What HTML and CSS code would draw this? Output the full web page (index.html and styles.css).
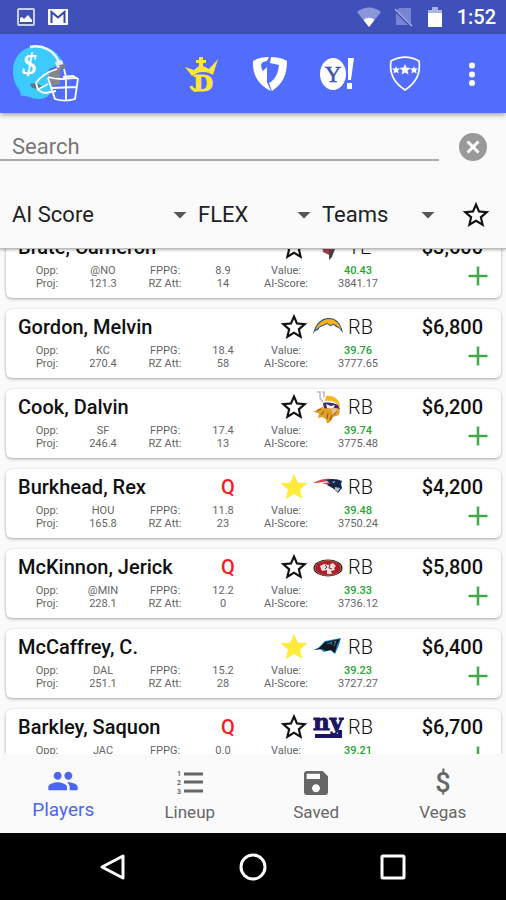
FILE: index.html
```html
<!DOCTYPE html>
<html lang="en">
<head>
    <meta charset="UTF-8">
    <meta name="viewport" content="width=device-width, initial-scale=1.0">
    <title>Players</title>
    <link rel="stylesheet" href="styles.css">
</head>
<body>
    <svg class="sprite" aria-hidden="true">
        <symbol id="star-outline" viewBox="0 0 24 24"><path d="M22 9.24l-7.19-.62L12 2 9.19 8.63 2 9.24l5.46 4.73L5.82 21 12 17.27 18.18 21l-1.63-7.03L22 9.24zM12 15.4l-3.76 2.27 1-4.28-3.32-2.88 4.38-.38L12 6.1l1.71 4.04 4.38.38-3.32 2.88 1 4.28L12 15.4z"/></symbol>
        <symbol id="star-full" viewBox="0 0 24 24"><path d="M12 17.27L18.18 21l-1.64-7.03L22 9.24l-7.19-.61L12 2 9.19 8.63 2 9.24l5.46 4.73L5.82 21z"/></symbol>
        <symbol id="arrow" viewBox="0 0 24 24"><path d="M5.500 9h13l-6.500 6.500z"/></symbol>
        <symbol id="plus" viewBox="0 0 24 24"><path d="M2.500 12h19M12 2.500v19" fill="none" stroke="currentColor" stroke-width="2.500"/></symbol>
        <symbol id="team-tb" viewBox="0 0 32 32">
            <path d="M9 8l15 1-2 10-5 5-6-3z" fill="#a8404c"/>
            <path d="M1 16h2v2H1zM17 20l6-2-3 8-3 3z" fill="#4a4242"/>
        </symbol>
        <symbol id="team-lac" viewBox="0 0 32 32">
            <path d="M1 23C3 13 9 7 17 7c7 0 12 5 14 15l-4-5-3-1-2-2-4 1-3-2-4 2-3 1-2 3-3 1z" fill="#1d4f86"/>
            <path d="M3 19C6 12 11 8 17 8c6 0 10 4 12 10l-4-3-3-2-4 1-3-2-4 2-3 1-2 2z" fill="#f5b01b"/>
        </symbol>
        <symbol id="team-min" viewBox="0 0 32 32">
            <path d="M5 1h3v6l3 4M10 1h2v5" fill="none" stroke="#bbb" stroke-width="1.500"/>
            <path d="M14 5c8-1 14 4 14 11l-3-3c-3-3-6-4-12-3z" fill="#f7b71c"/>
            <path d="M11 12c6-1 11 0 15 2l2 4-8-1-8 1z" fill="#3f2b6f"/>
            <path d="M14 13l5 2 4-1-2 4-6-1z" fill="#f4eee6"/>
            <path d="M1 21l9-5 5 2 6-1 7 1-1 6-6 2-2 4-4 3-1-5-4-2-4 1 1-5z" fill="#e0a021"/>
            <path d="M19 18l5-1 2 4-5 2z" fill="#e8bd96"/>
            <path d="M12 20l-3 4M16 22l-1 6M20 24l-2 5M9 18l-4 2M25 20l-3 4" stroke="#85521b" fill="none"/>
        </symbol>
        <symbol id="team-ne" viewBox="0 0 32 32">
            <path d="M1 12c7-4 14-5 18-4l-2 6-8-2z" fill="#d8404e"/>
            <path d="M4 12l13-2v1l-9 2z" fill="#fff"/>
            <path d="M14 9c6-2 12-1 16 1l-1 3 1 4-4 5-4-4-7-4 3-2z" fill="#14264b"/>
            <path d="M23 16l5 1-2 4-3-2z" fill="#b4bdc6"/>
            <path d="M19 10l2 1 2-1-1 2" fill="#fff"/>
        </symbol>
        <symbol id="team-sf" viewBox="0 0 32 32">
            <ellipse cx="16" cy="17" rx="14.500" ry="8.500" fill="#281c19"/>
            <ellipse cx="16" cy="17" rx="13" ry="7.500" fill="#b1192d" stroke="#a98458" stroke-width=".700"/>
            <path d="M8 15l4-2 4 1 5-2 3 3-2 2 1 2-4 1 1 3h-5v-4l-5 1-1-2z" fill="#eadfd9"/>
            <path d="M13 14l2 2-2 2M18 13l-1 4 3 1" fill="none" stroke="#7c3437"/>
        </symbol>
        <symbol id="team-car" viewBox="0 0 32 32">
            <path d="M1 19l5-2 7-7 16-3-2 7-4 9-5-4-6 2-4-3z" fill="#1389c1"/>
            <path d="M2 19l5-2 6-6 15-3-3 6-2 8-4-3-5 1-4-2z" fill="#101820"/>
            <path d="M15 13l5-2-1 3M22 11l2-1-2 5" fill="none" stroke="#507893"/>
        </symbol>
        <symbol id="team-nyg" viewBox="0 0 32 32">
            <text x="16" y="19" text-anchor="middle" font-family="DejaVu Serif, serif" font-weight="700" font-size="23" fill="#1b1464" stroke="#1b1464">ny</text>
            <path d="M3 25h25v-6" fill="none" stroke="#1b1464" stroke-width="4"/>
        </symbol>
    </svg>

    <div class="screen">
        <div class="status-bar">
            <svg class="status-icon" viewBox="0 0 20 20">
                <rect x="2" y="2" width="16" height="16" rx="1" fill="none" stroke="#c9cff0" stroke-width="2"/>
                <path d="M4 15v-4l2-1 2 2 4-4 4 5v2z" fill="#fff"/>
            </svg>
            <svg class="status-icon" viewBox="0 0 20 20">
                <rect x="0" y="2" width="20" height="16" rx="1" fill="#fff"/>
                <path d="M3.500 16V5l6.500 5.500L16.500 5v11" fill="none" stroke="#3045a8" stroke-width="2"/>
            </svg>
            <span class="status-spacer"></span>
            <svg class="status-wifi" viewBox="0 0 24 20">
                <path d="M12 20L0 5C7-1 17-1 24 5z" fill="#8b97d8"/>
                <path d="M12 20l-5.500-7c3-3 8-3 11 0z" fill="#fff"/>
            </svg>
            <svg class="status-icon" viewBox="0 0 20 20">
                <path d="M6 1h12v17H3V5z" fill="#7685d0"/>
                <path d="M1 2l17 17" stroke="#3f51b8" stroke-width="3"/>
                <path d="M2 2l17 17" stroke="#a7b1e2" stroke-width="1.500"/>
            </svg>
            <svg class="status-icon" viewBox="0 0 20 20">
                <path d="M3 3h4V0h6v3h4v4H3z" fill="#aab3e2"/>
                <path d="M3 6h14v14H3z" fill="#fff"/>
            </svg>
            <span class="clock">1:52</span>
        </div>

        <header class="app-bar">
            <div class="brand">
                <svg class="helmet" viewBox="0 0 66 58">
                    <path d="M25 1C8 1 0 14 0 26c0 9 3 15 7 20l1 5c6-1 10 3 18 3 7 0 11-4 13-9l-3-10V24l14-6C46 8 37 1 25 1z" fill="#3dcbff"/>
                    <path d="M17 2c13-3 24 4 29 15" fill="none" stroke="#f4fbff" stroke-width="2.500"/>
                    <path d="M49 20l-11 6-3 5 3 10 9-2V28z" fill="#83888c"/>
                    <path d="M42 17l7-2 2 6-7 2z" fill="#e8eef2"/>
                    <path d="M46 20l6-1 1 3-5 2z" fill="#777e88"/>
                    <path d="M17 39l6-1 6 3-2 3-8-1z" fill="#59768e"/>
                    <path d="M44 24c-10 3-17 8-21 14 1 6 4 10 10 10l10-2M35 32c10 3 18 2 29 1M35 33l7 21c7 2 14 2 20 0l3-20-5-3-10 1M38 43l26-1M51 24l2 8v23" fill="none" stroke="#fff" stroke-width="1.800"/>
                    <path d="M24 45l11-6" fill="none" stroke="#fff" stroke-width="1.500"/>
                    <text x="9" y="29" font-family="Liberation Serif, serif" font-style="italic" font-size="29" fill="#fff" stroke="#fff" stroke-width=".500">$</text>
                </svg>
            </div>
            <nav class="sites" aria-label="Sites">
                <button class="site" aria-label="DraftKings">
                    <svg viewBox="0 0 36 36">
                        <path d="M1 11l9 3 5-4V7h-3V4h3V1h4v3h3v3h-3v3l6 3 9-10-5 16c-6-4-15-4-21 1z" fill="#fde635"/>
                        <text x="19" y="35" text-anchor="middle" font-family="DejaVu Serif, serif" font-weight="700" font-size="23" fill="#fde635" stroke="#fde635">D</text>
                        <path d="M15 33c-3 2-7 1-8-3" fill="none" stroke="#fde635" stroke-width="3"/>
                    </svg>
                </button>
                <button class="site" aria-label="FanDuel">
                    <svg viewBox="0 0 36 36">
                        <path d="M1 5c5-3 10-4 16-4l-2 4-4 1c-3 2-2 6 0 9l4-4v15l4 9C8 30 0 20 1 5z" fill="#fff"/>
                        <path d="M19 1c6 0 11 1 16 4 0 15-5 23-15 30l-3-8c7-4 9-10 10-18l-9-2z" fill="#fff"/>
                        <path d="M10 16l4-1M10 20h4" stroke="#fff"/>
                    </svg>
                </button>
                <button class="site" aria-label="Yahoo">
                    <svg viewBox="0 0 36 36">
                        <ellipse cx="14" cy="18" rx="13" ry="16" fill="#fff"/>
                        <text x="14" y="26" text-anchor="middle" font-family="Liberation Serif, serif" font-size="23" fill="#3854b5" stroke="#3854b5" stroke-width=".500">Y</text>
                        <path d="M29 2h6l-3 22h-3zM28 27h5v6h-5z" fill="#fff"/>
                    </svg>
                </button>
                <button class="site" aria-label="Shield">
                    <svg viewBox="0 0 36 36">
                        <path d="M4 5c9-5 19-5 28 0 2 13-3 22-14 29C7 27 2 18 4 5z" fill="none" stroke="#fff" stroke-width="1.700"/>
                        <path d="M18 8l1.500 3.500 4 .500-3 2.500 1 4-3.500-2-3.500 2 1-4-3-2.500 4-.500zM9 10l1 2.500h3l-2 2 .500 3L9 16l-2.500 1.500.500-3-2-2h3zM27 10l1 2.500h3l-2 2 .500 3L27 16l-2.500 1.500.500-3-2-2h3z" fill="#fff"/>
                    </svg>
                </button>
                <button class="site" aria-label="More options">
                    <svg viewBox="0 0 36 36"><path d="M18 6.500a3 3 0 100 6 3 3 0 100-6zM18 15.500a3 3 0 100 6 3 3 0 100-6zM18 24a3 3 0 100 6 3 3 0 100-6z" fill="#fff"/></svg>
                </button>
            </nav>
        </header>

        <section class="filters">
            <div class="search-row">
                <input class="search" type="text" placeholder="Search" aria-label="Search">
                <button class="clear" aria-label="Clear search">
                    <svg viewBox="0 0 28 28"><circle cx="14" cy="14" r="14" fill="#999"/><path d="M8.500 8.500l11 11M19.500 8.500l-11 11" stroke="#fff" stroke-width="3"/></svg>
                </button>
            </div>
            <div class="select-row">
                <div class="select-box select-sort">
                    <select aria-label="Sort by"><option>AI Score</option></select>
                    <svg class="arrow"><use href="#arrow"/></svg>
                </div>
                <div class="select-box">
                    <select aria-label="Position"><option>FLEX</option></select>
                    <svg class="arrow"><use href="#arrow"/></svg>
                </div>
                <div class="select-box">
                    <select aria-label="Team"><option>Teams</option></select>
                    <svg class="arrow"><use href="#arrow"/></svg>
                </div>
                <button class="star" aria-label="Favorites only"><svg><use href="#star-outline"/></svg></button>
            </div>
        </section>

        <main class="players" id="players"></main>

        <nav class="tabs">
            <a class="tab active" href="#players">
                <svg viewBox="0 0 24 24"><path d="M16 11c1.660 0 2.990-1.340 2.990-3S17.660 5 16 5s-3 1.340-3 3 1.340 3 3 3zm-8 0c1.660 0 2.990-1.340 2.990-3S9.660 5 8 5 5 6.340 5 8s1.340 3 3 3zm0 2c-2.330 0-7 1.170-7 3.500V19h14v-2.500c0-2.330-4.670-3.500-7-3.500zm8 0c-.290 0-.620.020-.970.050 1.160.840 1.970 1.970 1.970 3.450V19h6v-2.500c0-2.330-4.670-3.500-7-3.500z"/></svg>
                <span>Players</span>
            </a>
            <a class="tab" href="#lineup">
                <svg viewBox="0 0 32 32">
                    <path d="M10 7h19M10 15h19M10 24h19" stroke="#666" stroke-width="3"/>
                    <g font-family="Roboto, sans-serif" font-weight="700" font-size="7"><text x="3" y="9">1</text><text x="3" y="18">2</text><text x="3" y="27">3</text></g>
                </svg>
                <span>Lineup</span>
            </a>
            <a class="tab" href="#saved">
                <svg viewBox="0 0 24 24"><path d="M17 3H5c-1.110 0-2 .900-2 2v14c0 1.100.890 2 2 2h14c1.100 0 2-.900 2-2V7l-4-4zm-5 16c-1.660 0-3-1.340-3-3s1.340-3 3-3 3 1.340 3 3-1.340 3-3 3zm3-10H5V5h10v4z"/></svg>
                <span>Saved</span>
            </a>
            <a class="tab" href="#vegas">
                <svg viewBox="0 0 32 32"><text x="16" y="25" text-anchor="middle" font-family="Roboto, sans-serif" font-weight="500" font-size="27">$</text></svg>
                <span>Vegas</span>
            </a>
        </nav>

        <div class="system-nav">
            <button aria-label="Back"><svg viewBox="0 0 28 28"><path d="M24 3v22L3 14z"/></svg></button>
            <button aria-label="Home"><svg viewBox="0 0 28 28"><circle cx="14" cy="14" r="12"/></svg></button>
            <button aria-label="Recent apps"><svg viewBox="0 0 28 28"><rect x="3" y="3" width="22" height="22" rx="1"/></svg></button>
        </div>
    </div>
    <script src="players.js"></script>
</body>
</html>
```

FILE: styles.css
```css
*, *::before, *::after {
    box-sizing: border-box;
}
body {
    margin: 0;
    font-family: Roboto, sans-serif;
    color: #111;
    background: #fafafa;
}
button {
    padding: 0;
    border: 0;
    background: none;
    font: inherit;
    color: inherit;
}
svg {
    display: block;
    fill: currentColor;
}
.sprite {
    position: absolute;
    width: 0;
    height: 0;
}
.screen {
    display: flex;
    flex-direction: column;
    height: 100vh;
}

/* status bar */
.status-bar {
    display: flex;
    align-items: center;
    gap: 12px;
    height: 34px;
    padding: 0 10px 0 16px;
    background: #3f51b8;
    color: #fff;
}
.status-icon {
    width: 20px;
    height: 20px;
}
.status-wifi {
    width: 24px;
    height: 20px;
}
.status-spacer { flex: 1; }
.clock {
    font-size: 20px;
    font-weight: 500;
}

/* app bar */
.app-bar {
    display: flex;
    align-items: center;
    height: 79px;
    background: #526dfe;
    position: relative;
    z-index: 3;
    box-shadow: 0 2px 5px rgba(0, 0, 0, 0.35);
}
.brand { flex: 1; }
.helmet {
    width: 66px;
    height: 58px;
    margin-left: 13px;
}
.sites {
    flex: 2;
    display: flex;
}
.site {
    flex: 1;
    display: flex;
    justify-content: center;
}
.site svg {
    width: 36px;
    height: 36px;
}

/* search and filters */
.filters {
    position: relative;
    z-index: 2;
    padding-top: 20px;
    background: #fafafa;
    border-bottom: 1px solid #bbb;
    box-shadow: 0 1px 3px rgba(0, 0, 0, 0.3);
}
.search-row {
    display: flex;
    align-items: center;
    padding-right: 19px;
    gap: 20px;
}
.search {
    flex: 1;
    min-width: 0;
    height: 28px;
    padding: 0 12px;
    border: 0;
    border-bottom: 2px solid #aaa;
    background: none;
    font: 22px Roboto, sans-serif;
}
.search::placeholder { color: #777; }
.clear svg {
    width: 28px;
    height: 28px;
}
.select-row {
    display: flex;
    align-items: center;
    gap: 6px;
    height: 67px;
    margin-top: 20px;
    padding: 0 14px 0 12px;
}
.select-box {
    position: relative;
    flex: 118;
}
.select-sort { flex: 180; }
.select-box select {
    width: 100%;
    padding: 0;
    border: 0;
    background: none;
    appearance: none;
    font: 22px Roboto, sans-serif;
    color: #222;
}
.arrow {
    position: absolute;
    right: 0;
    top: 1px;
    width: 24px;
    height: 24px;
    color: #555;
    pointer-events: none;
}
.star svg {
    width: 32px;
    height: 32px;
}
.select-row .star { margin-left: 14px; }

/* player list */
.players {
    flex: 1;
    min-height: 0;
    overflow-y: auto;
    scrollbar-width: none;
    padding: 11px 5px 0 6px;
}
.card {
    height: 69px;
    margin-bottom: 11px;
    padding: 2px 11px 0 12px;
    border-radius: 6px;
    background: #fff;
    box-shadow: 0 1px 3px rgba(0, 0, 0, 0.35);
}
.card-head {
    display: grid;
    grid-template-columns: 201fr 55fr 32px 32px 40px 102fr;
    gap: 2px;
    align-items: center;
    height: 32px;
    white-space: nowrap;
}
.name {
    font-size: 20px;
    font-weight: 500;
}
.injury {
    font-size: 20px;
    font-weight: 500;
    color: #f02020;
}
.star.on { color: #ffeb3b; }
.team {
    width: 32px;
    height: 32px;
}
.position {
    padding-left: 2px;
    font-size: 20px;
    font-weight: 300;
}
.price {
    padding-right: 7px;
    font-size: 20px;
    font-weight: 500;
    text-align: right;
}
.stats {
    display: grid;
    grid-template-columns: 58fr 54fr 70fr 46fr 80fr 64fr 100fr;
    align-items: start;
    margin-top: 1px;
    font-size: 11px;
    line-height: 13px;
    color: #666;
    text-align: center;
}
.stats .value {
    color: #27a52f;
    font-weight: 500;
}
.add {
    grid-column: 7;
    grid-row: 1 / 3;
    justify-self: end;
    color: #43a94a;
}
.add svg {
    width: 24px;
    height: 24px;
}

/* bottom tabs */
.tabs {
    display: flex;
    height: 79px;
    background: #fafafa;
}
.tab {
    flex: 1;
    display: flex;
    flex-direction: column;
    align-items: center;
    padding-top: 13px;
    font-size: 17px;
    line-height: 26px;
    color: #666;
    text-decoration: none;
}
.tab svg {
    width: 32px;
    height: 32px;
}
.tab.active {
    padding-top: 11px;
    font-size: 19px;
    color: #4b66f5;
}

/* system buttons */
.system-nav {
    display: flex;
    justify-content: center;
    height: 67px;
    background: #000;
}
.system-nav button {
    display: flex;
    justify-content: center;
    align-items: center;
    width: 140px;
}
.system-nav svg {
    width: 28px;
    height: 28px;
    fill: none;
    stroke: #fff;
    stroke-width: 3;
    stroke-linejoin: round;
}
```

FILE: players.js
```js
const players = [
    { name: 'Brate, Cameron', team: 'tb', pos: 'TE', price: '$3,600', opp: '@NO', proj: '121.3', fppg: '8.9', rz: '14', value: '40.43', score: '3841.17' },
    { name: 'Gordon, Melvin', team: 'lac', pos: 'RB', price: '$6,800', opp: 'KC', proj: '270.4', fppg: '18.4', rz: '58', value: '39.76', score: '3777.65' },
    { name: 'Cook, Dalvin', team: 'min', pos: 'RB', price: '$6,200', opp: 'SF', proj: '246.4', fppg: '17.4', rz: '13', value: '39.74', score: '3775.48' },
    { name: 'Burkhead, Rex', injury: 'Q', fav: true, team: 'ne', pos: 'RB', price: '$4,200', opp: 'HOU', proj: '165.8', fppg: '11.8', rz: '23', value: '39.48', score: '3750.24' },
    { name: 'McKinnon, Jerick', injury: 'Q', team: 'sf', pos: 'RB', price: '$5,800', opp: '@MIN', proj: '228.1', fppg: '12.2', rz: '0', value: '39.33', score: '3736.12' },
    { name: 'McCaffrey, C.', fav: true, team: 'car', pos: 'RB', price: '$6,400', opp: 'DAL', proj: '251.1', fppg: '15.2', rz: '28', value: '39.23', score: '3727.27' },
    { name: 'Barkley, Saquon', injury: 'Q', team: 'nyg', pos: 'RB', price: '$6,700', opp: 'JAC', proj: '', fppg: '0.0', rz: '', value: '39.21', score: '' },
];

const list = document.getElementById('players');

list.innerHTML = players.map((p) => `
    <article class="card">
        <div class="card-head">
            <span class="name">${p.name}</span>
            <span class="injury">${p.injury || ''}</span>
            <button class="star ${p.fav ? 'on' : ''}" aria-label="Favorite"><svg><use href="#star-${p.fav ? 'full' : 'outline'}"/></svg></button>
            <svg class="team"><use href="#team-${p.team}"/></svg>
            <span class="position">${p.pos}</span>
            <span class="price">${p.price}</span>
        </div>
        <div class="stats">
            <span>Opp:</span><span>${p.opp}</span>
            <span>FPPG:</span><span>${p.fppg}</span>
            <span>Value:</span><span class="value">${p.value}</span>
            <span>Proj:</span><span>${p.proj}</span>
            <span>RZ Att:</span><span>${p.rz}</span>
            <span>AI-Score:</span><span>${p.score}</span>
            <button class="add" aria-label="Add to lineup"><svg><use href="#plus"/></svg></button>
        </div>
    </article>
`).join('');

// start just past the top of the list
list.scrollTop = 31;
```
